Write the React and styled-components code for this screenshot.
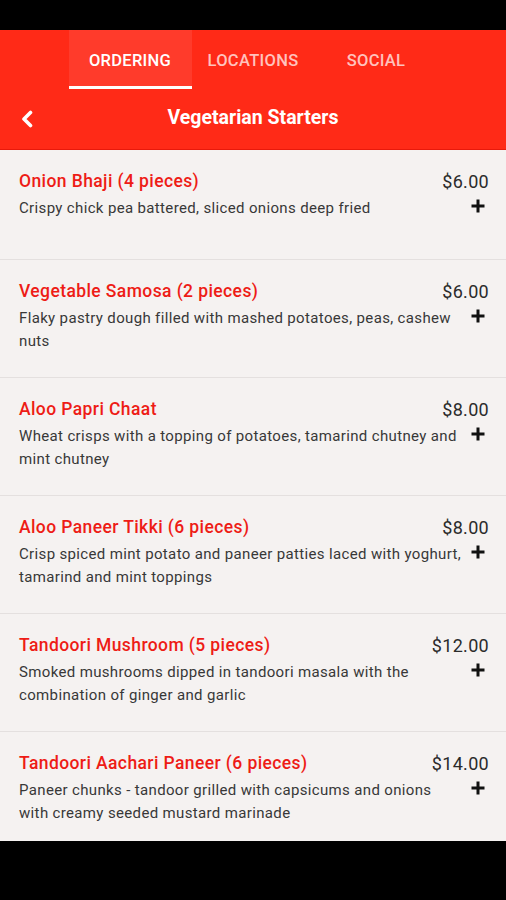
import React from 'react'
import styled, { createGlobalStyle } from 'styled-components'

const GlobalStyle = createGlobalStyle`
  html, body {
    margin: 0;
    padding: 0;
    background: #000;
  }
  body {
    font-family: Roboto, "Liberation Sans", sans-serif;
  }
`

const Screen = styled.div`
  width: 506px;
  height: 900px;
  display: flex;
  flex-direction: column;
  overflow: hidden;
  background: #f5f2f1;
`

const StatusBar = styled.div`
  height: 30px;
  flex: none;
  background: #000;
`

const NavBar = styled.div`
  height: 59px;
  flex: none;
  background: #000;
`

const Header = styled.header`
  flex: none;
  height: 120px;
  background: #ff2a17;
  border-bottom: 1px solid #e8190b;
  box-sizing: border-box;
  display: flex;
  flex-direction: column;
`

const Tabs = styled.nav`
  display: flex;
  justify-content: center;
  height: 59px;
`

const Tab = styled.div`
  width: 123px;
  box-sizing: border-box;
  display: flex;
  align-items: center;
  justify-content: center;
  padding-top: 4px;
  font-size: 16.5px;
  font-weight: 500;
  letter-spacing: 0.3px;
  color: ${props => props.active ? '#fff' : 'rgba(255,255,255,0.72)'};
  background: ${props => props.active ? '#ff3b2b' : 'transparent'};
  border-bottom: 3px solid ${props => props.active ? '#fff' : 'transparent'};
`

const TitleRow = styled.div`
  flex: 1;
  display: flex;
  align-items: center;
  position: relative;
  justify-content: center;
`

const BackButton = styled.div`
  position: absolute;
  left: 20px;
  top: 50%;
  transform: translateY(-50%);
  display: flex;
`

const Title = styled.h1`
  margin: 0;
  font-size: 19.5px;
  font-weight: 700;
  color: #fff;
  padding-bottom: 4px;
`

const List = styled.div`
  flex: 1;
  overflow: hidden;
`

const Item = styled.div`
  min-height: 110px;
  box-sizing: border-box;
  padding: 20px 17px 24px 19px;
  border-bottom: 1px solid #e4e0df;
`

const TopLine = styled.div`
  display: flex;
  justify-content: space-between;
  align-items: center;
  height: 22px;
`

const Name = styled.div`
  font-size: 17.5px;
  font-weight: 500;
  letter-spacing: 0.4px;
  color: #ee1c16;
`

const Price = styled.div`
  font-size: 18px;
  letter-spacing: 0.3px;
  color: #2b2b2b;
`

const Body = styled.div`
  display: flex;
  align-items: flex-start;
  margin-top: 5px;
`

const Desc = styled.p`
  margin: 0;
  flex: 1;
  font-size: 15px;
  letter-spacing: 0.35px;
  line-height: 23px;
  color: #383838;
`

const AddButton = styled.div`
  flex: none;
  width: 22px;
  display: flex;
  justify-content: flex-end;
  padding-right: 3px;
  padding-top: 1px;
`

const items = [
  { name: 'Onion Bhaji (4 pieces)', price: '$6.00', desc: 'Crispy chick pea battered, sliced onions deep fried' },
  { name: 'Vegetable Samosa (2 pieces)', price: '$6.00', desc: 'Flaky pastry dough filled with mashed potatoes, peas, cashew nuts' },
  { name: 'Aloo Papri Chaat', price: '$8.00', desc: 'Wheat crisps with a topping of potatoes, tamarind chutney and mint chutney' },
  { name: 'Aloo Paneer Tikki (6 pieces)', price: '$8.00', desc: 'Crisp spiced mint potato and paneer patties laced with yoghurt, tamarind and mint toppings' },
  { name: 'Tandoori Mushroom (5 pieces)', price: '$12.00', desc: 'Smoked mushrooms dipped in tandoori masala with the combination of ginger and garlic' },
  { name: 'Tandoori Aachari Paneer (6 pieces)', price: '$14.00', desc: 'Paneer chunks - tandoor grilled with capsicums and onions with creamy seeded mustard marinade' },
]

function Chevron() {
  return (
    <svg width="14" height="18" viewBox="0 0 14 18">
      <polyline points="10.5,2.5 4,9 10.5,15.5" fill="none" stroke="#fff" strokeWidth="3.6" strokeLinecap="round" strokeLinejoin="round" />
    </svg>
  )
}

function Plus() {
  return (
    <svg width="16" height="16" viewBox="0 0 16 16">
      <path d="M8 1.5v13M1.5 8h13" stroke="#111" strokeWidth="3" />
    </svg>
  )
}

export default function App() {
  return (
    <Screen>
      <GlobalStyle />
      <StatusBar />
      <Header>
        <Tabs>
          <Tab active>ORDERING</Tab>
          <Tab>LOCATIONS</Tab>
          <Tab>SOCIAL</Tab>
        </Tabs>
        <TitleRow>
          <BackButton><Chevron /></BackButton>
          <Title>Vegetarian Starters</Title>
        </TitleRow>
      </Header>
      <List>
        {items.map(item => (
          <Item key={item.name}>
            <TopLine>
              <Name>{item.name}</Name>
              <Price>{item.price}</Price>
            </TopLine>
            <Body>
              <Desc>{item.desc}</Desc>
              <AddButton><Plus /></AddButton>
            </Body>
          </Item>
        ))}
      </List>
      <NavBar />
    </Screen>
  )
}
